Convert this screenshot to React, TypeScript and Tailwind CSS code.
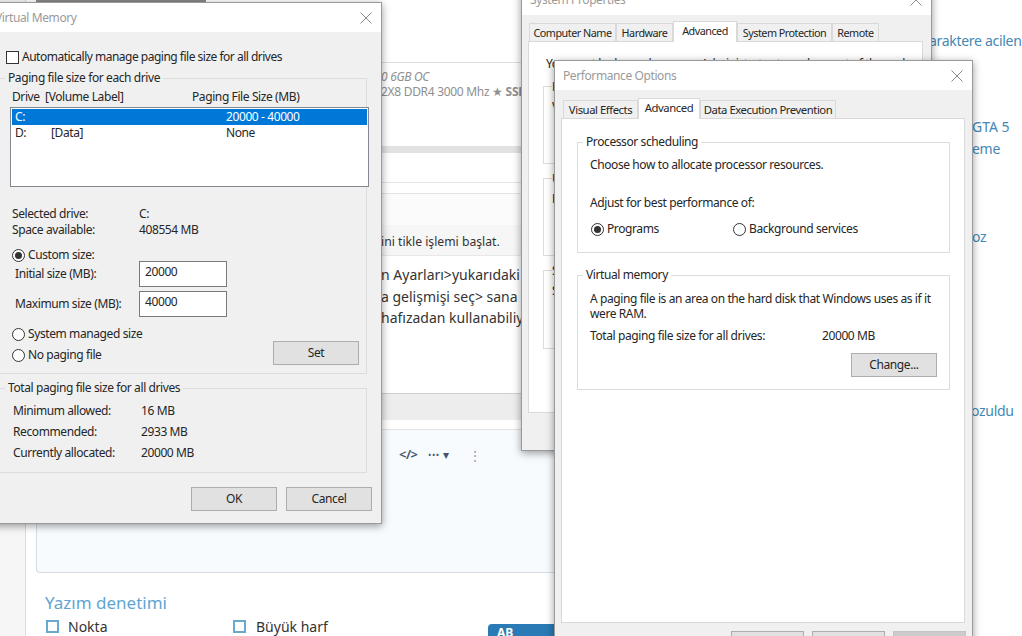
import React from "react";

const ui = "font-['Noto_Sans',sans-serif] text-[12px] leading-[16px] tracking-[-0.4px] text-[#262626]";

function Radio({ checked }: { checked?: boolean }) {
  return (
    <span className="flex h-[13px] w-[13px] shrink-0 items-center justify-center rounded-full border border-[#333] bg-white">
      {checked && <span className="h-[7px] w-[7px] rounded-full bg-[#333]" />}
    </span>
  );
}

function Btn({
  label,
  width = "w-[86px]",
  tone = "border-[#adadad] bg-[#e1e1e1]",
}: {
  label: string;
  width?: string;
  tone?: string;
}) {
  return (
    <div className={`flex h-[24px] items-center justify-center border ${width} ${tone}`}>
      {label}
    </div>
  );
}

function Group({
  title,
  className = "",
  children,
}: {
  title: string;
  className?: string;
  children: React.ReactNode;
}) {
  return (
    <fieldset className={`border border-[#dcdcdc] ${className}`}>
      <legend className="ml-[5px] px-[3px] leading-[14px]">{title}</legend>
      {children}
    </fieldset>
  );
}

function Tab({
  label,
  width,
  size,
  active,
}: {
  label: string;
  width: string;
  size: string;
  active?: boolean;
}) {
  return active ? (
    <div className={`z-10 -mb-px flex h-[21px] items-start justify-center whitespace-nowrap border border-b-0 border-[#d9d9d9] bg-white pt-[1px] ${width} ${size}`}>
      {label}
    </div>
  ) : (
    <div className={`flex h-[18px] items-center justify-center whitespace-nowrap border border-b-0 border-[#d9d9d9] bg-[#f0f0f0] ${width} ${size}`}>
      {label}
    </div>
  );
}

function CloseX() {
  return (
    <svg width="12" height="12" viewBox="0 0 12 12" className="shrink-0">
      <path d="M0.5 0.5 L11.5 11.5 M11.5 0.5 L0.5 11.5" stroke="#8a8a8a" strokeWidth="1" fill="none" />
    </svg>
  );
}

function VirtualMemory() {
  return (
    <div
      className={`absolute left-[-14px] top-[2px] z-20 flex h-[522px] w-[396px] flex-col border border-[#9a9a9a] bg-[#f0f0f0] shadow-[0_2px_8px_rgba(0,0,0,0.4)] ${ui}`}
    >
      <div className="flex h-[29px] shrink-0 items-center justify-between bg-white pl-[8px] pr-[9px] text-[#9a9a9a]">
        <span>Virtual Memory</span>
        <CloseX />
      </div>
      <div className="flex flex-col pl-[19px] pr-[9px]">
        <label className="mt-[17px] flex h-[16px] items-center gap-[3px]">
          <span className="h-[13px] w-[13px] border border-[#333] bg-white" />
          <span className="tracking-[-0.5px]">Automatically manage paging file size for all drives</span>
        </label>
        <fieldset className="-ml-[28px] mr-[5px] mt-[6px] h-[303px] border border-[#dcdcdc]">
          <legend className="ml-[26px] px-[3px] leading-[14px]">Paging file size for each drive</legend>
          <div className="mt-[4px] flex h-[16px] pl-[33px]">
            <span className="w-[180px]">Drive&nbsp; [Volume Label]</span>
            <span>Paging File Size (MB)</span>
          </div>
          <div className="ml-[31px] mr-[-3px] mt-[2px] h-[80px] border border-[#828790] bg-white p-[1px]">
            <div className="flex h-[16px] bg-[#0078d7] text-white">
              <span className="w-[214px] pl-[3px]">C:</span>
              <span>20000 - 40000</span>
            </div>
            <div className="flex h-[15px]">
              <span className="w-[39px] pl-[3px]">D:</span>
              <span className="w-[175px]">[Data]</span>
              <span>None</span>
            </div>
          </div>
          <div className="ml-[33px] mt-[19px] flex h-[16px]">
            <span className="w-[127px]">Selected drive:</span>
            <span>C:</span>
          </div>
          <div className="ml-[33px] flex h-[16px]">
            <span className="w-[127px]">Space available:</span>
            <span>408554 MB</span>
          </div>
          <div className="ml-[33px] mt-[9px] flex h-[16px] items-center gap-[3px]">
            <Radio checked />
            <span>Custom size:</span>
          </div>
          <div className="ml-[36px] mt-[-2px] flex h-[26px] items-center">
            <span className="w-[124px]">Initial size (MB):</span>
            <div className="flex h-[26px] w-[88px] items-start border border-[#7a7a7a] bg-white pl-[5px] pt-[2px]">20000</div>
          </div>
          <div className="ml-[36px] mt-[4px] flex h-[26px] items-center">
            <span className="w-[124px]">Maximum size (MB):</span>
            <div className="flex h-[26px] w-[88px] items-start border border-[#7a7a7a] bg-white pl-[5px] pt-[2px]">40000</div>
          </div>
          <div className="ml-[33px] mt-[9px] flex h-[16px] items-center gap-[3px]">
            <Radio />
            <span>System managed size</span>
          </div>
          <div className="ml-[33px] mr-[7px] mt-[-3px] flex h-[28px] items-center justify-between">
            <div className="mt-[4px] flex items-center gap-[3px]">
              <Radio />
              <span>No paging file</span>
            </div>
            <Btn label="Set" />
          </div>
        </fieldset>
        <fieldset className="-ml-[28px] mr-[5px] mt-[7px] h-[92px] border border-[#dcdcdc]">
          <legend className="ml-[26px] px-[3px] leading-[14px]">Total paging file size for all drives</legend>
          <div className="ml-[34px] mt-[5px] flex h-[21px] items-center">
            <span className="w-[128px]">Minimum allowed:</span>
            <span>16 MB</span>
          </div>
          <div className="ml-[34px] flex h-[21px] items-center">
            <span className="w-[128px]">Recommended:</span>
            <span>2933 MB</span>
          </div>
          <div className="ml-[34px] flex h-[21px] items-center">
            <span className="w-[128px]">Currently allocated:</span>
            <span>20000 MB</span>
          </div>
        </fieldset>
        <div className="mt-[14px] flex justify-end gap-[9px]">
          <Btn label="OK" />
          <Btn label="Cancel" />
        </div>
      </div>
    </div>
  );
}

const spTab = "text-[10.8px] tracking-[-0.5px]";
const poTab = "text-[11.3px] tracking-[-0.45px]";

function SystemProperties() {
  return (
    <div
      className={`absolute left-[521px] top-[-16px] z-30 flex h-[467px] w-[411px] flex-col border border-[#9a9a9a] bg-[#f0f0f0] shadow-[0_2px_8px_rgba(0,0,0,0.4)] ${ui}`}
    >
      <div className="flex h-[30px] shrink-0 items-center justify-between bg-white pl-[8px] pr-[9px] text-[#9a9a9a]">
        <span>System Properties</span>
        <CloseX />
      </div>
      <div className="mt-[6px] flex items-end pl-[7px]">
        <Tab label="Computer Name" width="w-[87px]" size={spTab} />
        <Tab label="Hardware" width="w-[57px]" size={spTab} />
        <Tab label="Advanced" width="w-[64px]" size={spTab} active />
        <Tab label="System Protection" width="w-[95px]" size={spTab} />
        <Tab label="Remote" width="w-[47px]" size={spTab} />
      </div>
      <div className="ml-[6px] mr-[8px] h-[372px] shrink-0 border border-[#d9d9d9] bg-white pl-[14px] pr-[14px]">
        <div className="ml-[3px] mt-[14px] h-[16px] whitespace-nowrap">You must be logged on as an Administrator to make most of these changes.</div>
        <div className="mt-[14px] h-[78px] border border-[#dcdcdc] pl-[8px]">
          <div className="-mt-[8px] bg-white">Performance</div>
          <div className="mt-[4px]">Visual effects</div>
        </div>
        <div className="mt-[14px] h-[78px] border border-[#dcdcdc] pl-[8px]">
          <div className="-mt-[8px] bg-white">User Profiles</div>
          <div className="mt-[4px]">Desktop settings</div>
        </div>
        <div className="mt-[14px] h-[79px] border border-[#dcdcdc] pl-[8px]">
          <div className="-mt-[8px] bg-white">Startup and Recovery</div>
          <div className="mt-[4px]">System startup</div>
        </div>
      </div>
    </div>
  );
}

function PerformanceOptions() {
  return (
    <div
      className={`absolute left-[554px] top-[60px] z-40 flex h-[590px] w-[419px] flex-col border border-[#9a9a9a] bg-[#f0f0f0] shadow-[0_2px_8px_rgba(0,0,0,0.4)] ${ui}`}
    >
      <div className="flex h-[29px] shrink-0 items-center justify-between bg-white pl-[8px] pr-[9px] text-[#9a9a9a]">
        <span>Performance Options</span>
        <CloseX />
      </div>
      <div className="mt-[8px] flex items-end pl-[8px]">
        <Tab label="Visual Effects" width="w-[75px]" size={poTab} />
        <Tab label="Advanced" width="w-[62px]" size={poTab} active />
        <Tab label="Data Execution Prevention" width="w-[136px]" size={poTab} />
      </div>
      <div className="ml-[6px] mr-[7px] h-[505px] shrink-0 border border-[#d9d9d9] bg-white pl-[15px] pr-[14px] pt-[16px]">
        <Group title="Processor scheduling" className="h-[118px]">
          <div className="ml-[12px] mt-[8px] h-[16px]">Choose how to allocate processor resources.</div>
          <div className="ml-[12px] mt-[22px] h-[16px]">Adjust for best performance of:</div>
          <div className="ml-[13px] mt-[10px] flex h-[16px] items-center">
            <div className="flex w-[142px] items-center gap-[3px]">
              <Radio checked />
              <span>Programs</span>
            </div>
            <div className="flex items-center gap-[3px]">
              <Radio />
              <span>Background services</span>
            </div>
          </div>
        </Group>
        <Group title="Virtual memory" className="mt-[15px] h-[122px]">
          <div className="ml-[12px] mr-[10px] mt-[9px] h-[30px] leading-[15px]">
            A paging file is an area on the hard disk that Windows uses as if it were RAM.
          </div>
          <div className="ml-[12px] mt-[7px] flex h-[16px]">
            <span className="w-[232px]">Total paging file size for all drives:</span>
            <span>20000 MB</span>
          </div>
          <div className="mr-[12px] mt-[9px] flex justify-end">
            <Btn label="Change..." />
          </div>
        </Group>
      </div>
      <div className="mt-[8px] flex justify-end gap-[8px] pr-[6px]">
        <Btn label="OK" width="w-[73px]" />
        <Btn label="Cancel" width="w-[73px]" />
        <Btn label="Apply" width="w-[73px]" tone="border-[#c4c4c4] bg-[#cccccc] text-[#8a8a8a]" />
      </div>
    </div>
  );
}

function PageBehind() {
  return (
    <div className="flex h-[636px] w-[1022px] font-['Noto_Sans',sans-serif] text-[14px] text-[#333]">
      <div className="w-[26px] shrink-0 border-r border-[#dcdcdc] bg-[#f6f6f6]" />
      <div className="flex w-[903px] shrink-0 flex-col overflow-hidden">
        <div className="ml-[10px] h-[2px] w-[170px] bg-[#888]" />
        <div className="h-[61px] border-b border-[#dedede] bg-white" />
        <div className="h-[84px] pl-[355px] pt-[6px] text-[12px] leading-[15px] tracking-[-0.3px] text-[#8f8f8f]">
          <div className="italic">0 6GB OC</div>
          <div className="whitespace-nowrap">
            2X8 DDR4 3000 Mhz ★ <b>SSD</b>
          </div>
        </div>
        <div className="h-[7px] bg-[#e2e2e2]" />
        <div className="h-[30px] border-b border-[#e4e4e4]" />
        <div className="h-[11px] border-b border-[#e4e4e4]" />
        <div className="h-[32px] bg-[#fbfbfb]" />
        <div className="flex h-[31px] items-center border-b border-[#e8e8e8] bg-[#f6f6f6] pl-[355px] pt-[3px] text-[12.2px]">
          ini tikle işlemi başlat.
        </div>
        <div className="h-[138px] whitespace-nowrap pl-[355px] pt-[8px] text-[14px] leading-[21.5px]">
          <div>n Ayarları&gt;yukarıdaki</div>
          <div>a gelişmişi seç&gt; sana</div>
          <div>hafızadan kullanabiliy</div>
        </div>
        <div className="h-[27px] border-t border-[#cfcfcf] bg-[#ededed]" />
        <div className="h-[10px] border-b border-[#e2e2e2]" />
        <div className="ml-[10px] h-[144px] rounded-bl border-b border-l border-[#d6dde4] bg-[#f7fbfe]">
          <div className="flex h-[50px] items-center pl-[362px] text-[#44546a]">
            <span className="w-[29px] text-[13px] font-semibold tracking-[-0.5px]">&lt;/&gt;</span>
            <span className="flex w-[40px] items-center gap-[3px] text-[9px] tracking-[0.5px]">
              •••<span className="text-[12px] tracking-normal">▾</span>
            </span>
            <span className="text-[#9aa5b1]">⋮</span>
          </div>
        </div>
        <div className="ml-[19px] mt-[18px] text-[17px] leading-[24px] text-[#5fa5d3]">Yazım denetimi</div>
        <div className="ml-[20px] mt-[1px] flex h-[20px] items-center">
          <span className="h-[13px] w-[13px] border-2 border-[#6aa9cf] bg-white" />
          <span className="ml-[9px] w-[165px]">Nokta</span>
          <span className="h-[13px] w-[13px] border-2 border-[#6aa9cf] bg-white" />
          <span className="ml-[10px] w-[232px]">Büyük harf</span>
          <span className="mt-[8px] h-[20px] w-[80px] self-start rounded-t bg-[#2a7ab5] pl-[9px] text-[12px] font-bold text-white">AB</span>
        </div>
      </div>
      <div className="flex flex-1 flex-col whitespace-nowrap text-[14px] leading-[22px] tracking-[-0.3px] text-[#4488b5]">
        <div className="mt-[30px]">araktere acilen</div>
        <div className="ml-[43px] mt-[64px] tracking-normal">GTA 5</div>
        <div className="ml-[43px]">eme</div>
        <div className="ml-[43px] mt-[66px]">oz</div>
        <div className="ml-[42px] mt-[152px]">ozuldu</div>
      </div>
    </div>
  );
}

export default function App() {
  return (
    <div className="relative h-[636px] w-[1022px] overflow-hidden bg-white">
      <PageBehind />
      <VirtualMemory />
      <SystemProperties />
      <PerformanceOptions />
    </div>
  );
}
